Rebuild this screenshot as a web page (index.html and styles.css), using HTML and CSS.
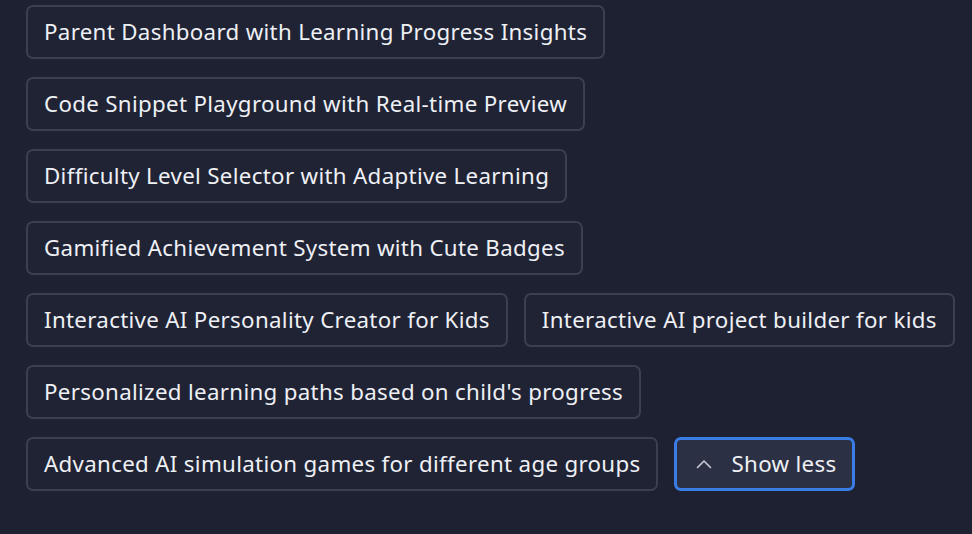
FILE: index.html
```html
<!DOCTYPE html>
<html lang="en">
<head>
<meta charset="utf-8">
<title>Ideas</title>
<link rel="stylesheet" href="styles.css">
</head>
<body>
<div class="chips">
  <button class="chip">Parent Dashboard with Learning Progress Insights</button>
  <button class="chip">Code Snippet Playground with Real-time Preview</button>
  <button class="chip">Difficulty Level Selector with Adaptive Learning</button>
  <button class="chip">Gamified Achievement System with Cute Badges</button>
  <button class="chip">Interactive AI Personality Creator for Kids</button>
  <button class="chip">Interactive AI project builder for kids</button>
  <button class="chip">Personalized learning paths based on child's progress</button>
  <button class="chip">Advanced AI simulation games for different age groups</button>
  <button class="chip toggle">
    <svg class="caret" width="16" height="16" viewBox="0 0 16 16" fill="none"><path d="M1.5 11.5 L8 5 L14.5 11.5" stroke="currentColor" stroke-width="1.6" stroke-linecap="round" stroke-linejoin="round"/></svg>
    <span>Show less</span>
  </button>
</div>
</body>
</html>
```
FILE: styles.css
```css
html, body {
  margin: 0;
  padding: 0;
  background: #1e2131;
}
body {
  font-family: "Noto Sans", "Liberation Sans", sans-serif;
  width: 972px;
  height: 534px;
  overflow: hidden;
}
.chips {
  display: flex;
  flex-wrap: wrap;
  align-items: flex-start;
  column-gap: 16px;
  row-gap: 18px;
  padding: 5px 8px 0 26px;
}
.chip {
  box-sizing: border-box;
  height: 54px;
  padding: 0 16px;
  background: #1f2334;
  border: 2px solid #3a3f52;
  border-radius: 7px;
  color: #eef0f4;
  font-family: inherit;
  font-size: 22.3px;
  letter-spacing: 0.32px;
  line-height: 1;
  display: inline-flex;
  align-items: center;
  white-space: nowrap;
  cursor: pointer;
}
.toggle {
  background: #2c3044;
  border: 3px solid #3a7de6;
  padding: 0 16px 0 19px;
  gap: 19px;
}
.caret {
  color: #c9ccd6;
  flex: none;
}
```
